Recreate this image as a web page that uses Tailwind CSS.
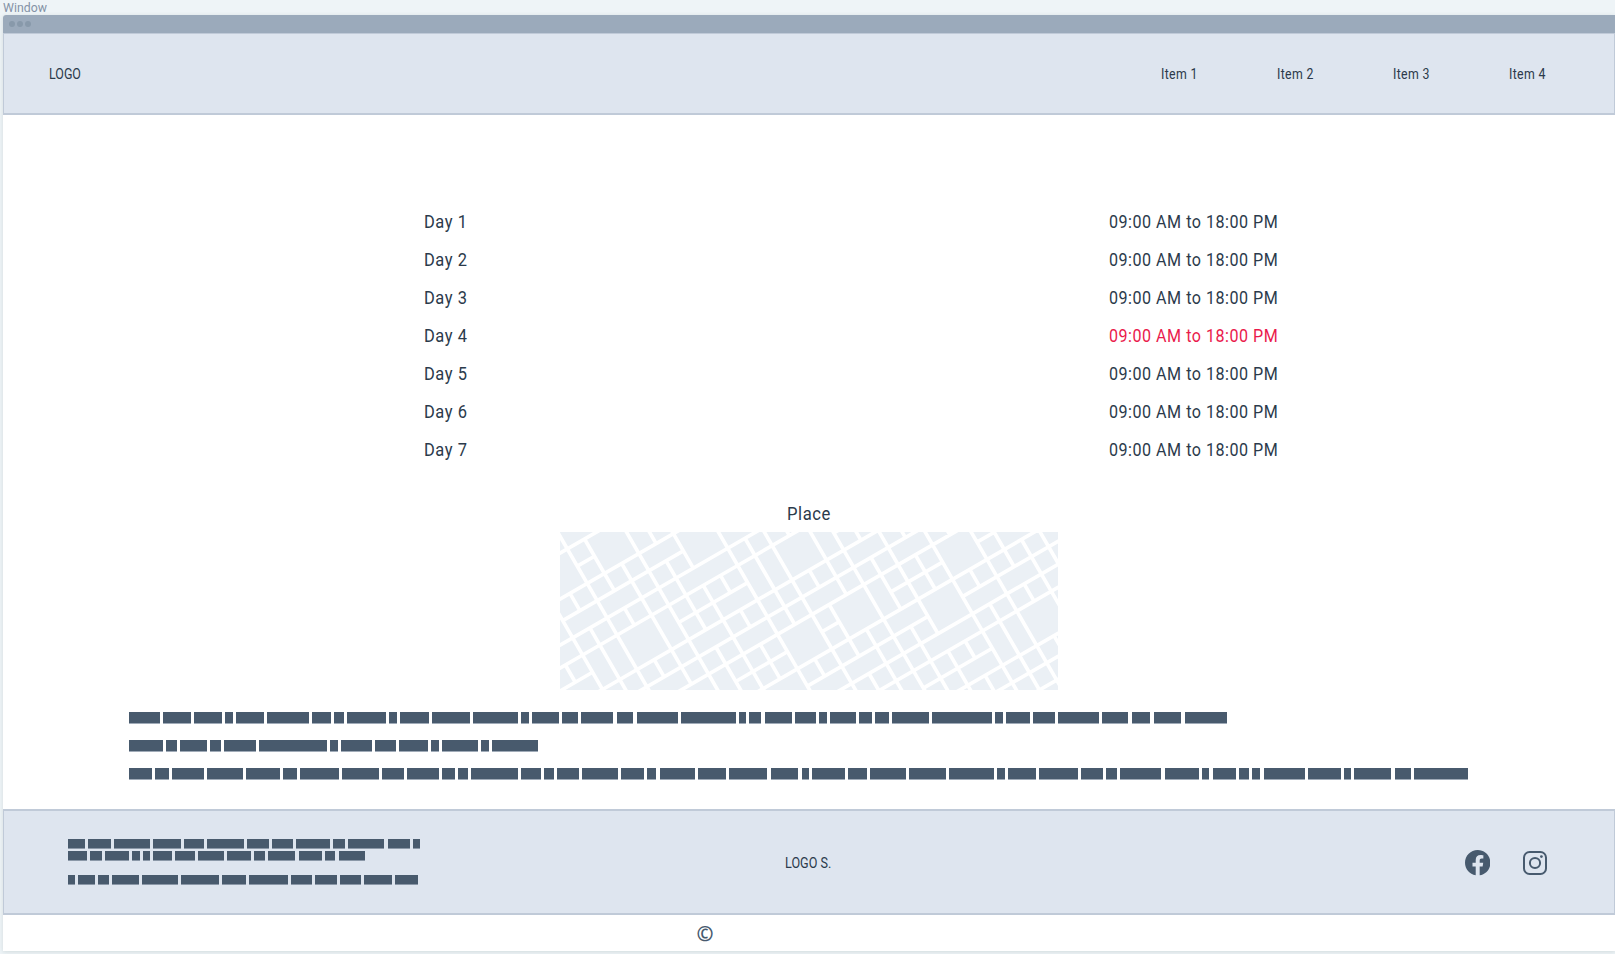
<!DOCTYPE html>
<html lang="en">
<head>
<meta charset="utf-8">
<title>Window</title>
<script src="https://cdn.jsdelivr.net/npm/@tailwindcss/browser@4"></script>
</head>
<body class="w-[1615px] h-[954px] overflow-hidden bg-[#eef4f7] font-[Roboto,sans-serif] text-[#2b3a4b] pl-[3px] flex flex-col">
  <div class="h-[15px] shrink-0 text-[12.3px] leading-[17px] text-[#8492a6]">Window</div>
  <div class="h-[936px] shrink-0 bg-white flex flex-col rounded-tl-[3px] shadow-[0_1px_4px_rgba(60,90,90,0.16)]">
    <div class="h-[18px] shrink-0 bg-[#9baabb] rounded-tl-[3px] flex items-center gap-[2px] pl-[6px]">
      <i class="size-[6px] rounded-full bg-[#8899aa]"></i>
      <i class="size-[6px] rounded-full bg-[#8899aa]"></i>
      <i class="size-[6px] rounded-full bg-[#8899aa]"></i>
    </div>

    <header class="h-[82px] shrink-0 bg-[#dee5ef] border border-b-2 border-[#c0cad8] flex items-center justify-between pt-[2px] pl-[44.5px] text-[14px]">
      <span class="inline-block origin-left scale-x-[0.89]">LOGO</span>
      <nav class="flex">
        <span class="w-[116px]"><span class="inline-block origin-left scale-x-[0.88] tracking-[0.4px]">Item 1</span></span>
        <span class="w-[116px]"><span class="inline-block origin-left scale-x-[0.88] tracking-[0.4px]">Item 2</span></span>
        <span class="w-[116px]"><span class="inline-block origin-left scale-x-[0.88] tracking-[0.4px]">Item 3</span></span>
        <span class="w-[105px]"><span class="inline-block origin-left scale-x-[0.88] tracking-[0.4px]">Item 4</span></span>
      </nav>
    </header>

    <main class="h-[694px] shrink-0 pt-[88px] flex flex-col">
      <div id="schedule" class="flex flex-col pl-[421px] text-[18.3px] leading-[38px]"></div>
      <h2 class="mt-[26px] h-[37px] pl-[783.5px] leading-[37px] text-[18.3px]"><span class="inline-block origin-left scale-x-[0.91] tracking-[0.6px]">Place</span></h2>
      <svg class="ml-[557px] block shrink-0" width="498" height="158" viewBox="0 0 498 158">
        <defs>
          <path id="streets" fill="none" stroke="#fff" stroke-width=".185" d="M0 0H9M0 1H7M0 2H9M0 3H9M5 4H9M0 5H9M0 6H9M0 7H9M2 8H3M6 8H9
            M0 0V9M1 0V1M1 2V7M2 0V9M3 0V1M3 2V3M3 5V6M3 7V9M4 0V7M5 0V9M6 1V5M6 6V9M7 0V2M7 3V9M8 3V4M8 5V6M8 7V9"/>
        </defs>
        <rect width="498" height="158" fill="#ebf0f5"/>
        <g transform="translate(-5.3 -44.7) rotate(-30) scale(19.9)">
          <use href="#streets" x="-12" y="-4"/><use href="#streets" x="-3" y="-4"/><use href="#streets" x="6" y="-4"/><use href="#streets" x="15" y="-4"/>
          <use href="#streets" x="-12" y="5"/><use href="#streets" x="-3" y="5"/><use href="#streets" x="6" y="5"/><use href="#streets" x="15" y="5"/>
          <use href="#streets" x="-12" y="14"/><use href="#streets" x="-3" y="14"/><use href="#streets" x="6" y="14"/><use href="#streets" x="15" y="14"/>
        </g>
      </svg>
      <div id="body-text" class="mt-[22px] ml-[126px] flex flex-col gap-[16px]"></div>
    </main>

    <footer class="h-[106px] shrink-0 bg-[#dee5ef] border border-y-2 border-[#c0cad8] grid grid-cols-[757.5px_1fr_150px] items-center pt-[2px]">
      <div id="footer-text" class="ml-[64px] flex flex-col"></div>
      <span class="ml-[23px] text-[14px]"><span class="inline-block origin-left scale-x-[0.9]">LOGO S.</span></span>
      <div class="flex items-center gap-[32.6px] pl-px">
        <svg width="25.4" height="25.4" viewBox="0 0 24 24" fill="#475a6e"><path d="M24 12.073c0-6.627-5.373-12-12-12s-12 5.373-12 12c0 5.99 4.388 10.954 10.125 11.854v-8.385H7.078v-3.47h3.047V9.43c0-3.007 1.792-4.669 4.533-4.669 1.312 0 2.686.235 2.686.235v2.953H15.83c-1.491 0-1.956.925-1.956 1.874v2.25h3.328l-.532 3.47h-2.796v8.385C19.612 23.027 24 18.062 24 12.073z"/></svg>
        <svg width="24" height="24" viewBox="0 0 24 24" fill="none" stroke="#475a6e" stroke-width="2"><rect x="1" y="1" width="22" height="22" rx="5.6"/><circle cx="12" cy="12" r="5.1"/><circle cx="18.4" cy="5.6" r="1.4" fill="#475a6e" stroke="none"/></svg>
      </div>
    </footer>
    <div class="h-[36px] pl-[693.5px] leading-[37px] text-[20.5px] font-bold text-[#475a6e] font-['Open_Sans',sans-serif]">©</div>
  </div>

<script>
  const schedule = document.getElementById('schedule');
  for (let day = 1; day <= 7; day++) {
    const row = document.createElement('div');
    row.className = 'flex h-[38px]';
    row.innerHTML =
      '<span class="w-[685px]"><span class="inline-block origin-left scale-x-[0.9] tracking-[0.6px]">Day ' + day + '</span></span>' +
      '<span class="inline-block origin-left scale-x-[0.88] tracking-[0.58px] whitespace-nowrap ' + (day === 4 ? 'text-[#ea1a4c]' : '') + '">09:00 AM to 18:00 PM</span>';
    schedule.append(row);
  }

  // Each placeholder word is given by its right edge, in thirds of a pixel.
  function placeholder(parent, start, gap, height, rowClass, ends) {
    const row = document.createElement('div');
    row.className = rowClass;
    let prev = start - gap;
    ends.forEach((end, n) => {
      const word = document.createElement('i');
      word.className = 'block shrink-0 bg-[#485a6d] ' + height;
      word.style.width = (end - prev - gap) / 3 + 'px';
      if (n) word.style.marginLeft = gap / 3 + 'px';
      row.append(word);
      prev = end;
    });
    parent.append(row);
  }
  const body = document.getElementById('body-text');
  [
    [150,242,335,368,462,597,662,702,828,861,956,1080,1224,1257,1346,1404,1511,1571,1704,1878,1908,1955,2046,2118,2151,2238,2286,2337,2457,2646,2679,2760,2835,2967,3056,3122,3215,3351],
    [159,201,291,333,438,651,684,786,858,954,987,1104,1137,1284],
    [126,176,282,398,510,561,687,807,881,987,1034,1074,1224,1292,1332,1406,1524,1601,1640,1755,1848,1973,2066,2097,2205,2271,2388,2508,2653,2686,2778,2904,2979,3021,3155,3267,3299,3378,3418,3452,3585,3693,3723,3845,3904,4075]
  ].forEach(ends => placeholder(body, 57, 10, 'h-[11px] border-b border-[#a0abb8] box-content', 'flex h-[12px]', ends));
  const foot = document.getElementById('footer-text');
  [
    [255,333,450,544,612,733,807,880,992,1035,1155,1232,1261],
    [261,306,387,421,452,516,586,672,753,795,888,967,1008,1098],
    [225,285,327,417,534,657,738,864,936,1012,1084,1177,1256]
  ].forEach((ends, n) => placeholder(foot, 205, 9.5, 'h-[9px] border-b border-[#8b98a8] box-content', n === 1 ? 'flex h-[24px]' : 'flex h-[12px]', ends));
</script>
</body>
</html>
